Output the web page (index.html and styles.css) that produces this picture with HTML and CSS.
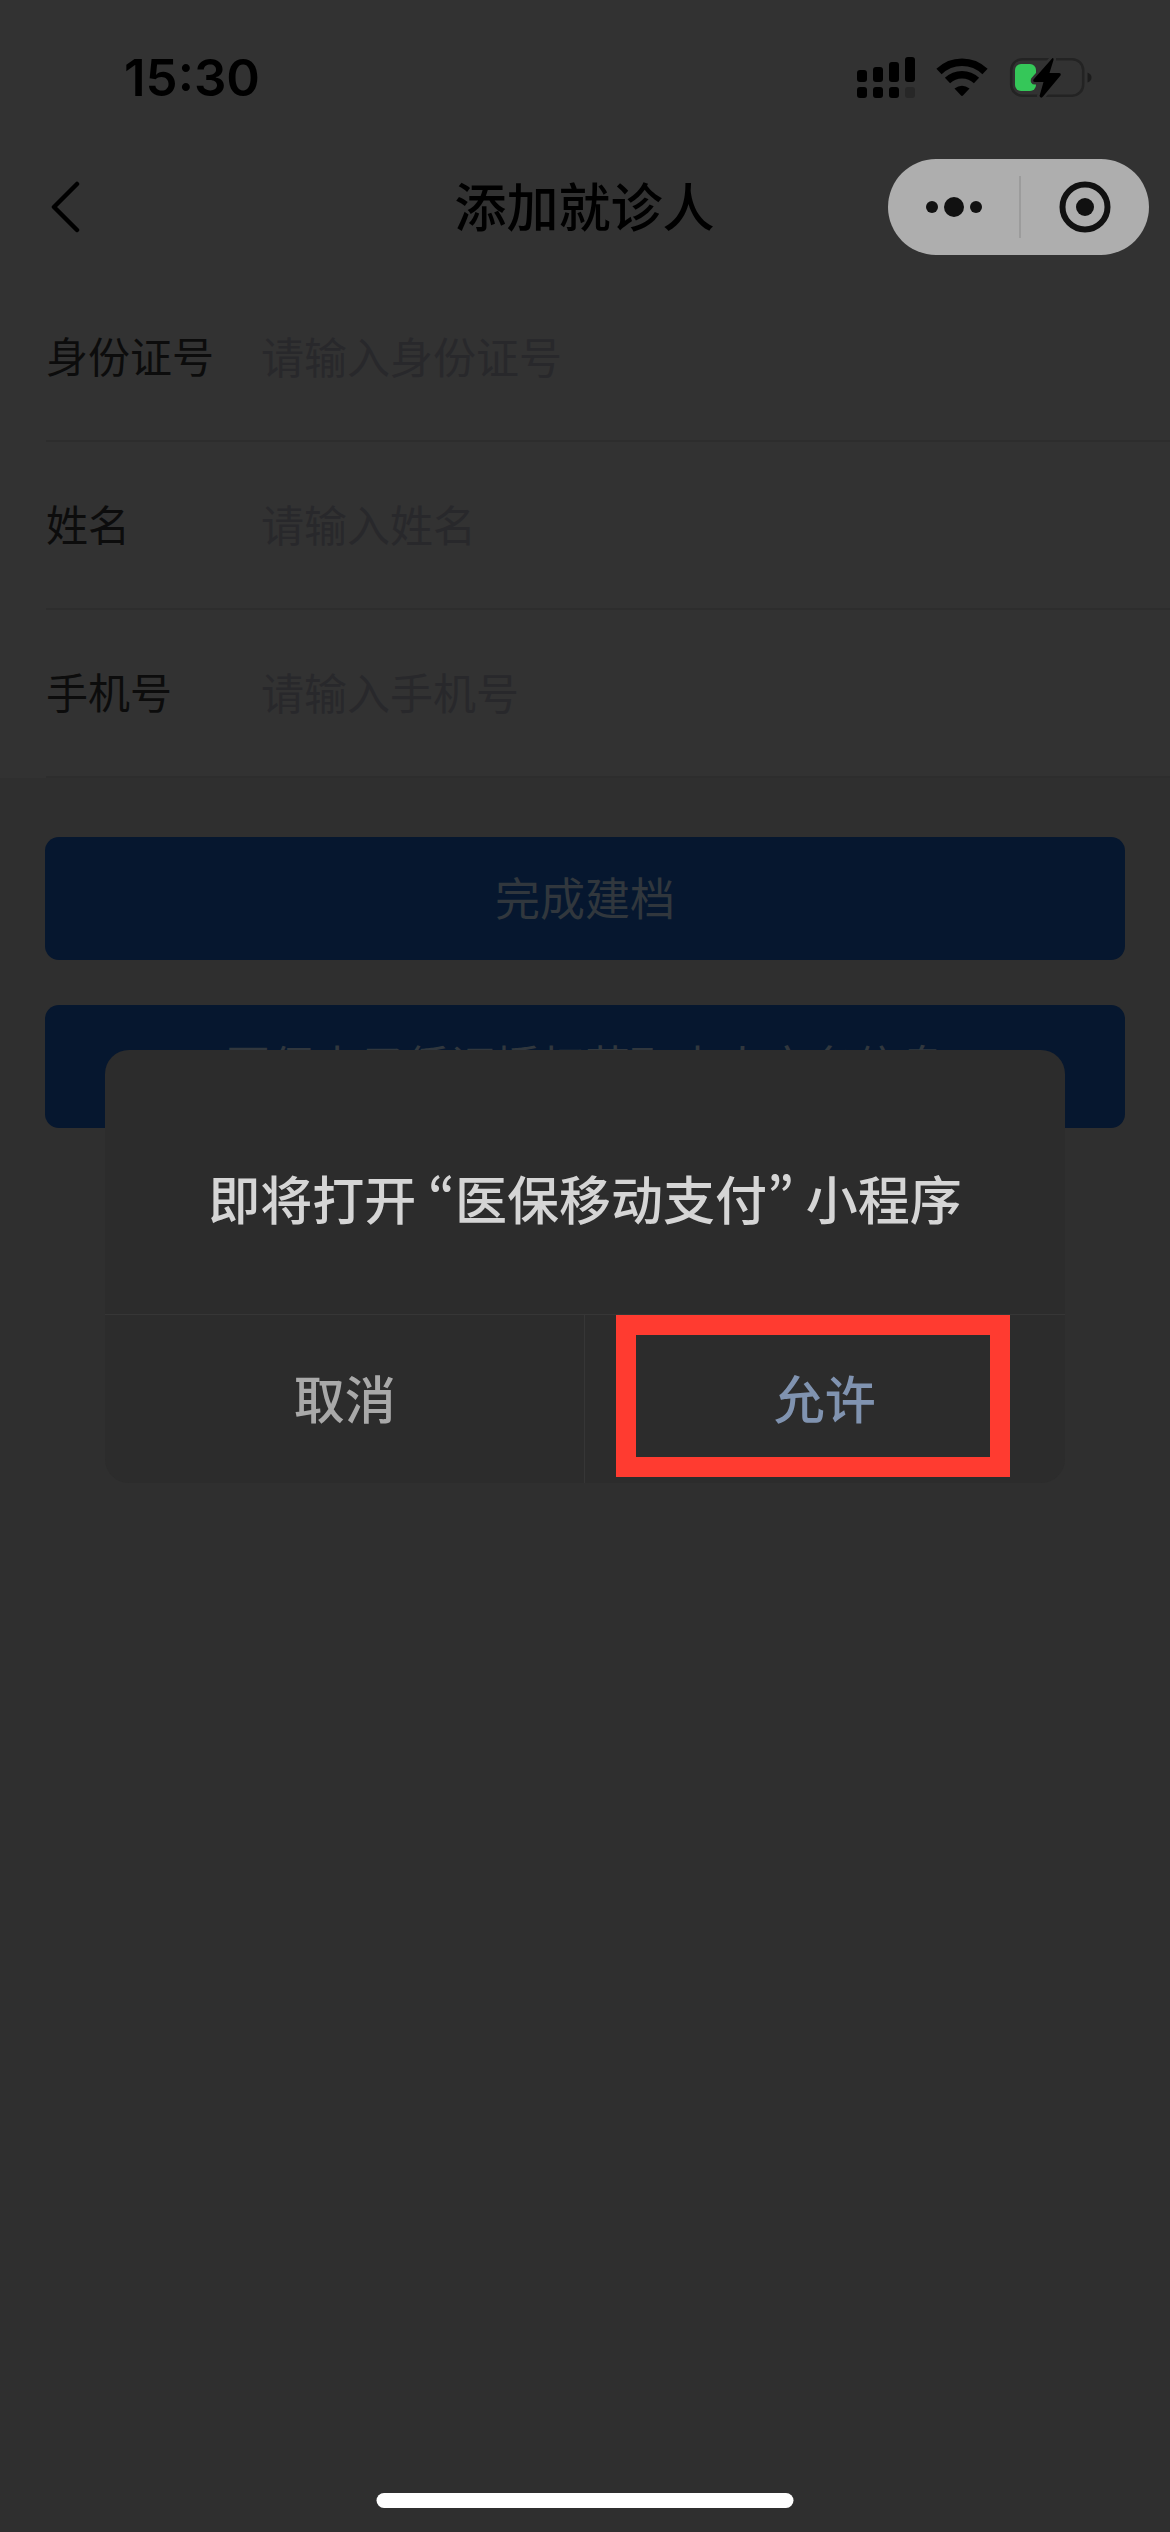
FILE: index.html
```html
<!DOCTYPE html>
<html lang="zh-CN">
<head>
<meta charset="utf-8">
<meta name="viewport" content="width=device-width, initial-scale=1">
<title>添加就诊人</title>
<link rel="stylesheet" href="styles.css">
</head>
<body>
<div class="page">
  <div class="top">
    <div class="status-bar">
      <time class="clock">15:30</time>
      <div class="status-icons">
        <svg width="58" height="42" viewBox="0 0 58 42" aria-label="信号">
          <rect x="0" y="13" width="10" height="12" rx="3"/>
          <rect x="16" y="10" width="10" height="15" rx="3"/>
          <rect x="32" y="5" width="10" height="20" rx="3"/>
          <rect x="48" y="0" width="10" height="25" rx="3"/>
          <rect x="0" y="30" width="10" height="11" rx="3"/>
          <rect x="16" y="30" width="10" height="11" rx="3"/>
          <rect x="32" y="30" width="10" height="11" rx="3"/>
          <rect x="48" y="30" width="10" height="11" rx="3" fill="#272727"/>
        </svg>
        <svg width="52" height="40" viewBox="0 0 52 40" aria-label="无线网络">
          <path d="M3 13.500A33 33 0 0 1 49 13.500" fill="none" stroke="#000" stroke-width="7.500"/>
          <path d="M11.500 22.500A21 21 0 0 1 40.500 22.500" fill="none" stroke="#000" stroke-width="7.500"/>
          <path d="M18.500 30.500Q26 25 33.500 30.500L27.200 37.300Q26 38.500 24.800 37.300Z"/>
        </svg>
        <svg width="84" height="44" viewBox="0 0 84 44" aria-label="充电中">
          <rect x="2.200" y="3.200" width="72" height="36.500" rx="11" fill="none" stroke="#232323" stroke-width="2.500"/>
          <path d="M78.500 16.500Q82.500 18 82.500 21.500Q82.500 25 78.500 26.500Z" fill="#1c1c1c"/>
          <rect x="6" y="8" width="21" height="27" rx="6" fill="#35c759"/>
          <path d="M43.500 2L24.500 23.500Q23.500 26 26 26H34.500L30.500 40Q32 43 34 40.500L51.500 19.500Q52.500 17 50 17H40.500L44.500 4Q45 2 43.500 2Z" stroke="#323232" stroke-width="5" paint-order="stroke"/>
        </svg>
      </div>
    </div>
    <header class="nav-bar">
      <button class="back" type="button" aria-label="返回">
        <svg width="30" height="52" viewBox="0 0 30 52"><path d="M27 3L4 26L27 49" fill="none" stroke="#000" stroke-width="4.500" stroke-linecap="round" stroke-linejoin="round"/></svg>
      </button>
      <h1 class="title">添加就诊人</h1>
      <div class="capsule">
        <button type="button" aria-label="更多">
          <svg width="58" height="22" viewBox="0 0 58 22"><circle cx="7" cy="11" r="6"/><circle cx="29" cy="11" r="10"/><circle cx="51" cy="11" r="6"/></svg>
        </button>
        <button type="button" aria-label="关闭">
          <svg width="52" height="52" viewBox="0 0 52 52"><circle cx="26" cy="26" r="22.500" fill="none" stroke="#111" stroke-width="6"/><circle cx="26" cy="26" r="9"/></svg>
        </button>
      </div>
    </header>
  </div>

  <form class="form">
    <div class="fields">
      <div class="field"><label for="id-number">身份证号</label><input id="id-number" type="text" placeholder="请输入身份证号"></div>
      <div class="field"><label for="name">姓名</label><input id="name" type="text" placeholder="请输入姓名"></div>
      <div class="field"><label for="phone">手机号</label><input id="phone" type="tel" placeholder="请输入手机号"></div>
    </div>
    <div class="actions">
      <button class="primary" type="button">完成建档</button>
      <button class="primary" type="button">医保电子凭证授权获取本人实名信息</button>
    </div>
  </form>
</div>

<div class="overlay">
  <div class="dialog" role="dialog" aria-modal="true" aria-labelledby="dialog-text">
    <p class="dialog-text" id="dialog-text">即将打开 <span class="quote" lang="ko">“</span>医保移动支付<span class="quote" lang="ko">”</span> 小程序</p>
    <div class="dialog-actions">
      <button class="cancel" type="button">取消</button>
      <button class="allow" type="button">允许</button>
      <span class="highlight"></span>
    </div>
  </div>
</div>
<div class="home-indicator"></div>
</body>
</html>
```

FILE: styles.css
```css
* {
  box-sizing: border-box;
}

body {
  margin: 0;
  background: #2f2f2f;
  color: #000;
  font-family: "Noto Sans CJK SC", sans-serif;
}

button,
input {
  margin: 0;
  padding: 0;
  border: 0;
  background: none;
  color: inherit;
  font: inherit;
}

svg {
  display: block;
}

.page {
  min-height: 100vh;
}

.top {
  background: #323232;
}

.status-bar {
  display: flex;
  align-items: center;
  justify-content: space-between;
  height: 140px;
  padding: 16px 77px 0 124px;
}

.clock {
  font: 600 51px/60px Inter, sans-serif;
}

.status-icons {
  display: flex;
  align-items: center;
  gap: 21px;
}

.nav-bar {
  display: grid;
  grid-template-columns: 1fr auto 1fr;
  align-items: center;
  height: 134px;
  padding: 0 21px 0 50px;
}

.title {
  margin: 0;
  padding: 0 30px 4px 0;
  font-size: 52px;
  font-weight: 500;
  line-height: 72px;
}

.capsule {
  display: grid;
  grid-template-columns: 1fr 1fr;
  align-items: center;
  justify-self: end;
  width: 261px;
  height: 96px;
  border-radius: 48px;
  background: #aeaeae;
  fill: #111;
}

.capsule button {
  display: flex;
  align-items: center;
  justify-content: center;
  height: 62px;
  padding-left: 2px;
}

.capsule button + button {
  padding: 0;
  border-left: 2px solid #9c9c9c;
}

.fields {
  padding-left: 46px;
  background: #323232;
}

.field {
  display: flex;
  align-items: center;
  height: 168px;
  padding-bottom: 4px;
  border-bottom: 2px solid #2d2d2d;
  font-size: 42px;
  line-height: 60px;
}

.field label {
  flex: 0 0 215px;
  color: #0c0c0c;
}

.field input {
  flex: 1;
  min-width: 0;
  height: 60px;
  font-size: 43px;
}

.field input::placeholder {
  color: #28282b;
  opacity: 1;
}

.actions {
  display: flex;
  flex-direction: column;
  gap: 45px;
  padding: 59px 45px;
}

.primary {
  height: 123px;
  padding-bottom: 4px;
  border-radius: 14px;
  background: #06172f;
  color: #31373d;
  font-size: 45px;
}

.overlay {
  position: fixed;
  inset: 0;
  display: flex;
  align-items: center;
  justify-content: center;
}

.dialog {
  width: 82%;
  border-radius: 24px;
  background: #2c2c2c;
}

.dialog-text {
  margin: 0;
  padding: 112px 60px 80px;
  color: #d5d5d5;
  font-size: 52px;
  font-weight: 500;
  line-height: 72px;
  text-align: center;
}

.quote {
  font-family: "Noto Sans CJK KR", sans-serif;
}

.dialog-actions {
  position: relative;
  display: grid;
  grid-template-columns: 1fr 1fr;
  height: 169px;
  border-top: 1px solid #363636;
  font-size: 51px;
  font-weight: 500;
}

.cancel,
.allow {
  padding-bottom: 4px;
}

.cancel {
  border-right: 1px solid #363636;
  color: #a9a9a9;
}

.allow {
  color: #8093b0;
}

.highlight {
  position: absolute;
  top: 0;
  right: 55px;
  width: 394px;
  height: 162px;
  border: 20px solid #ff3b30;
  pointer-events: none;
}

.home-indicator {
  position: fixed;
  bottom: 24px;
  left: 50%;
  width: 417px;
  height: 15px;
  border-radius: 8px;
  background: #fff;
  transform: translateX(-50%);
}
```
